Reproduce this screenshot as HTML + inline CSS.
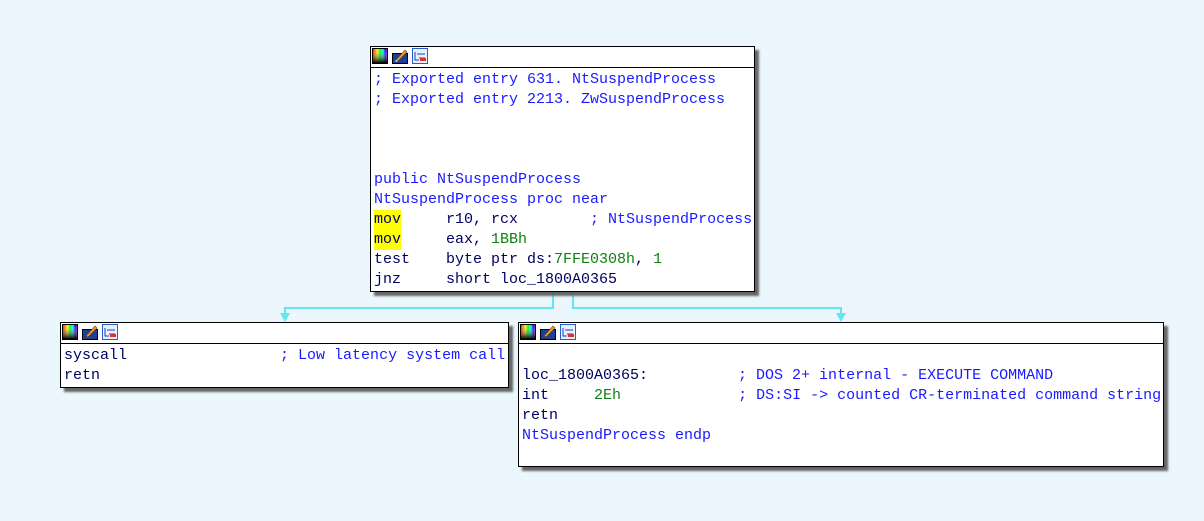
<!DOCTYPE html>
<html><head><style>
body{margin:0;width:1204px;height:521px;background:#ebf7fd;position:relative;overflow:hidden;font-family:"Liberation Mono",monospace;font-size:15px;}
.box{position:absolute;background:#fff;border:1px solid #000;box-shadow:4px 4px 2px #666;box-sizing:border-box;}
.hd{height:20px;border-bottom:1px solid #000;position:relative;}
.ic{position:absolute;top:1px;width:16px;height:16px;}
.tx{padding-left:3px;padding-top:2px;white-space:pre;line-height:20px;color:#000060;}
.b{color:#1a1aff}.g{color:#108010}.y{background:#ffff00;display:inline-block;height:20px;vertical-align:top}
.ln{position:absolute;background:#62e6f0;}
.ar{position:absolute;width:0;height:0;border-left:5px solid transparent;border-right:5px solid transparent;border-top:9px solid #62e6f0;}
</style></head><body>
<svg width="0" height="0" style="position:absolute"><defs>
<linearGradient id="rb" x1="0" x2="1"><stop offset="0" stop-color="#f00"/><stop offset=".33" stop-color="#ff0"/><stop offset=".5" stop-color="#0f0"/><stop offset=".7" stop-color="#0ff"/><stop offset=".85" stop-color="#00f"/><stop offset="1" stop-color="#f0f"/></linearGradient>
<linearGradient id="dk" x1="0" y1="0" x2="0" y2="1"><stop offset="0" stop-color="#fff" stop-opacity="0"/><stop offset="1" stop-color="#000"/></linearGradient>
</defs></svg>
<div class="ln" style="left:552px;top:291px;width:2px;height:18px"></div>
<div class="ln" style="left:572px;top:291px;width:2px;height:18px"></div>
<div class="ln" style="left:284px;top:307px;width:270px;height:2px"></div>
<div class="ln" style="left:572px;top:307px;width:270px;height:2px"></div>
<div class="ln" style="left:284px;top:307px;width:2px;height:8px"></div>
<div class="ln" style="left:840px;top:307px;width:2px;height:8px"></div>
<div class="ar" style="left:280px;top:313px"></div>
<div class="ar" style="left:836px;top:313px"></div>

<div class="box" style="left:370px;top:46px;width:385px;height:246px">
<div class="hd">
<svg class="ic" style="left:1px" viewBox="0 0 16 16"><rect x=".5" y=".5" width="15" height="15" fill="url(#rb)" stroke="#000"/><rect x="1" y="1" width="14" height="14" fill="url(#dk)"/></svg>
<svg class="ic" style="left:21px" viewBox="0 0 16 16"><rect x=".5" y="5.5" width="15" height="10" fill="#1c3f9c" stroke="#000"/><path d="M4 12 L13 2 L15 4 L6 13 Z" fill="#f0a020" stroke="#704000" stroke-width=".6"/><path d="M4 12 L3 14 L6 13Z" fill="#fff"/></svg>
<svg class="ic" style="left:41px" viewBox="0 0 16 16"><rect x=".5" y=".5" width="15" height="15" fill="#e8f0ff" stroke="#2a5fc8"/><path d="M3 4v8h4M5 6h8M7 10h6" stroke="#1040c0" fill="none"/><rect x="8" y="10" width="6" height="3" fill="#e03030"/></svg>
</div>
<div class="tx"><span class="b">; Exported entry 631. NtSuspendProcess
; Exported entry 2213. ZwSuspendProcess



public NtSuspendProcess
NtSuspendProcess proc near</span>
<span class="y">mov</span>     r10, rcx        <span class="b">; NtSuspendProcess</span>
<span class="y">mov</span>     eax, <span class="g">1BBh</span>
test    byte ptr ds:<span class="g">7FFE0308h</span>, <span class="g">1</span>
jnz     short loc_1800A0365</div>
</div>

<div class="box" style="left:60px;top:322px;width:449px;height:66px">
<div class="hd">
<svg class="ic" style="left:1px" viewBox="0 0 16 16"><rect x=".5" y=".5" width="15" height="15" fill="url(#rb)" stroke="#000"/><rect x="1" y="1" width="14" height="14" fill="url(#dk)"/></svg>
<svg class="ic" style="left:21px" viewBox="0 0 16 16"><rect x=".5" y="5.5" width="15" height="10" fill="#1c3f9c" stroke="#000"/><path d="M4 12 L13 2 L15 4 L6 13 Z" fill="#f0a020" stroke="#704000" stroke-width=".6"/></svg>
<svg class="ic" style="left:41px" viewBox="0 0 16 16"><rect x=".5" y=".5" width="15" height="15" fill="#e8f0ff" stroke="#2a5fc8"/><path d="M3 4v8h4M5 6h8M7 10h6" stroke="#1040c0" fill="none"/><rect x="8" y="10" width="6" height="3" fill="#e03030"/></svg>
</div>
<div class="tx">syscall                 <span class="b">; Low latency system call</span>
retn</div>
</div>

<div class="box" style="left:518px;top:322px;width:646px;height:145px">
<div class="hd">
<svg class="ic" style="left:1px" viewBox="0 0 16 16"><rect x=".5" y=".5" width="15" height="15" fill="url(#rb)" stroke="#000"/><rect x="1" y="1" width="14" height="14" fill="url(#dk)"/></svg>
<svg class="ic" style="left:21px" viewBox="0 0 16 16"><rect x=".5" y="5.5" width="15" height="10" fill="#1c3f9c" stroke="#000"/><path d="M4 12 L13 2 L15 4 L6 13 Z" fill="#f0a020" stroke="#704000" stroke-width=".6"/></svg>
<svg class="ic" style="left:41px" viewBox="0 0 16 16"><rect x=".5" y=".5" width="15" height="15" fill="#e8f0ff" stroke="#2a5fc8"/><path d="M3 4v8h4M5 6h8M7 10h6" stroke="#1040c0" fill="none"/><rect x="8" y="10" width="6" height="3" fill="#e03030"/></svg>
</div>
<div class="tx">
loc_1800A0365:          <span class="b">; DOS 2+ internal - EXECUTE COMMAND</span>
int     <span class="g">2Eh</span>             <span class="b">; DS:SI -&gt; counted CR-terminated command string</span>
retn
<span class="b">NtSuspendProcess endp</span></div>
</div>
</body></html>
